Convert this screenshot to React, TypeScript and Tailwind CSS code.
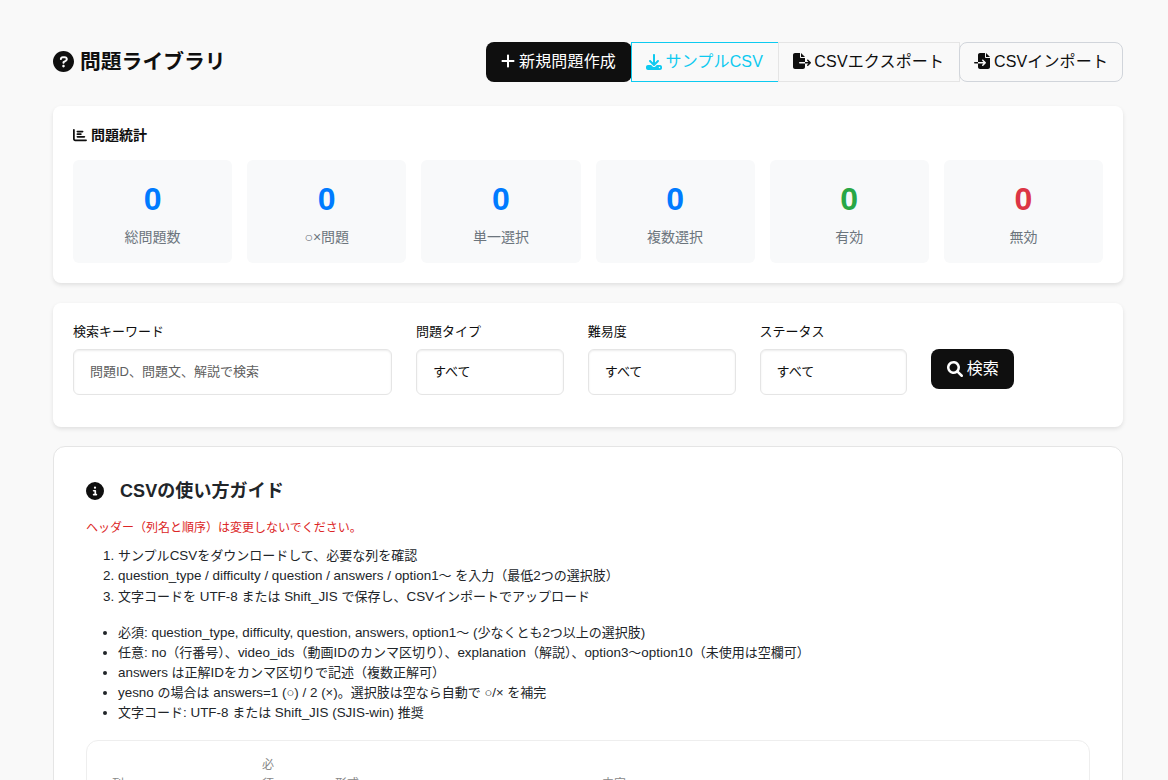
import React, { useState } from "react";
import {
  FaChartBar,
  FaCircleInfo,
  FaDownload,
  FaFileExport,
  FaFileImport,
  FaPlus,
} from "react-icons/fa6";

const stats = [
  { label: "総問題数", value: 0, color: "text-[#007bff]" },
  { label: "○×問題", value: 0, color: "text-[#007bff]" },
  { label: "単一選択", value: 0, color: "text-[#007bff]" },
  { label: "複数選択", value: 0, color: "text-[#007bff]" },
  { label: "有効", value: 0, color: "text-[#28a745]" },
  { label: "無効", value: 0, color: "text-[#dc3545]" },
];

const steps = [
  "サンプルCSVをダウンロードして、必要な列を確認",
  "question_type / difficulty / question / answers / option1〜 を入力（最低2つの選択肢）",
  "文字コードを UTF-8 または Shift_JIS で保存し、CSVインポートでアップロード",
];

const notes = [
  "必須: question_type, difficulty, question, answers, option1〜 (少なくとも2つ以上の選択肢)",
  "任意: no（行番号）、video_ids（動画IDのカンマ区切り）、explanation（解説）、option3〜option10（未使用は空欄可）",
  "answers は正解IDをカンマ区切りで記述（複数正解可）",
  "yesno の場合は answers=1 (○) / 2 (×)。選択肢は空なら自動で ○/× を補完",
  "文字コード: UTF-8 または Shift_JIS (SJIS-win) 推奨",
];

function QuestionIcon() {
  return (
    <svg viewBox="0 0 512 512" fill="currentColor" className="mb-px size-[21px]">
      <path d="M256 0C114.6 0 0 114.6 0 256s114.6 256 256 256s256-114.6 256-256S397.4 0 256 0zM256 400c-18 0-32-14-32-32s13.1-32 32-32c17.1 0 32 14 32 32S273.1 400 256 400zM325.1 258L280 286V288c0 13-11 24-24 24S232 301 232 288V272c0-8 4-16 12-21l57-34C308 213 312 206 312 198C312 186 301.1 176 289.1 176h-51.1C225.1 176 216 186 216 198c0 13-11 24-24 24s-24-11-24-24C168 159 199 128 237.1 128h51.1C329 128 360 159 360 198C360 222 347 245 325.1 258z" />
    </svg>
  );
}

function SearchIcon() {
  return (
    <svg viewBox="0 0 512 512" fill="currentColor" className="size-4">
      <path d="M500.3 443.7l-119.7-119.7c27.22-40.41 40.65-90.9 33.46-144.7C401.8 87.79 326.8 13.32 235.2 1.723C99.01-15.51-15.51 99.01 1.724 235.2c11.6 91.64 86.08 166.7 177.6 178.9c53.8 7.189 104.3-6.236 144.7-33.46l119.7 119.7c15.62 15.62 40.95 15.62 56.57 0C515.9 484.7 515.9 459.3 500.3 443.7zM79.1 208c0-70.58 57.42-128 128-128s128 57.42 128 128c0 70.58-57.42 128-128 128S79.1 278.6 79.1 208z" />
    </svg>
  );
}

// Latin runs are set slightly larger than the Japanese ones
function MixedText(props: { text: string }) {
  return (
    <>
      {props.text.split(/([ -~]+)/).map((part, i) =>
        i % 2 === 1 ? (
          part
        ) : (
          <span key={i} className="text-[13px]">
            {part}
          </span>
        )
      )}
    </>
  );
}

function Header() {
  return (
    <header className="flex justify-between items-center h-10">
      <h1 className="flex items-center gap-1.5 text-[20.8px] font-bold">
        <QuestionIcon />
        問題ライブラリ
      </h1>
      <div className="flex h-10 text-base tracking-[0.15px] whitespace-nowrap">
        <button className="flex items-center justify-center gap-1 w-[146px] pr-px rounded-lg bg-[#0f0f0f] text-white">
          <FaPlus className="w-[14px] h-4 mb-0.5" />
          新規問題作成
        </button>
        <button className="flex items-center justify-center gap-[3.5px] w-[148px] -ml-px pr-px border border-[#0dcaf0] text-[#0dcaf0]">
          <FaDownload className="mb-px" />
          サンプルCSV
        </button>
        <button className="flex items-center justify-center gap-[3.5px] w-[182px] -ml-px pr-px border border-[#e5e5e5] bg-[#f9f9f9]">
          <FaFileExport className="w-[18px] h-4 mb-0.5" />
          CSVエクスポート
        </button>
        <button className="flex items-center justify-center gap-1 w-[164px] -ml-px border border-[#d1d5db] rounded-lg bg-[#f9f9f9]">
          <FaFileImport className="mb-0.5" />
          CSVインポート
        </button>
      </div>
    </header>
  );
}

function Stats() {
  return (
    <section className="mt-6 h-[177px] p-5 rounded-lg bg-white shadow-[0_2px_4px_rgba(0,0,0,0.1)]">
      <h2 className="flex items-center gap-1 h-[18px] text-[14px] font-bold">
        <FaChartBar className="size-[14px]" />
        問題統計
      </h2>
      <div className="grid grid-cols-6 gap-[15px] mt-4">
        {stats.map((item) => (
          <div
            key={item.label}
            className="flex flex-col items-center h-[103px] pt-[15px] rounded-md bg-[#f8f9fa]"
          >
            <span className={"text-[32px] leading-[48px] font-bold " + item.color}>
              {item.value}
            </span>
            <span className="mt-1 text-[14px] leading-[21px] text-[#6c757d]">
              {item.label}
            </span>
          </div>
        ))}
      </div>
    </section>
  );
}

function SelectField(props: { label: string }) {
  return (
    <div className="w-[147.8px]">
      <label className="block h-[25px] mt-px text-[13px] leading-4">{props.label}</label>
      <select className="appearance-none block w-full h-[46px] px-4 border border-[#e5e5e5] rounded-md bg-white text-[13px] shadow-[inset_0_1px_2px_rgba(0,0,0,0.075)]">
        <option>すべて</option>
      </select>
    </div>
  );
}

function SearchForm() {
  const [keyword, setKeyword] = useState("");

  return (
    <section className="flex gap-6 mt-5 h-[124px] p-5 rounded-lg bg-white shadow-[0_2px_4px_rgba(0,0,0,0.1)]">
      <div className="w-[319px]">
        <label className="block h-[25px] mt-px text-[13px] leading-4">検索キーワード</label>
        <input
          className="block w-full h-[46px] px-4 pb-0.5 border border-[#e5e5e5] rounded-md bg-white text-[13px] placeholder:text-[#606060] shadow-[inset_0_1px_2px_rgba(0,0,0,0.075)]"
          placeholder="問題ID、問題文、解説で検索"
          value={keyword}
          onChange={(e) => setKeyword(e.target.value)}
        />
      </div>
      <SelectField label="問題タイプ" />
      <SelectField label="難易度" />
      <SelectField label="ステータス" />
      <button className="flex items-center justify-center gap-[3.5px] w-[83px] h-10 mt-[26px] rounded-lg bg-[#0f0f0f] text-base text-white">
        <SearchIcon />
        検索
      </button>
    </section>
  );
}

function Guide() {
  return (
    <section className="mt-[19px] px-8 pt-8 h-[500px] border border-[#e5e5e5] rounded-xl bg-white text-[#212529]">
      <h2 className="flex items-center gap-4 h-6 text-[18px] tracking-[0.08px] font-bold">
        <FaCircleInfo className="size-[18px] text-[#0f0f0f]" />
        CSVの使い方ガイド
      </h2>
      <p className="mt-4 h-[18px] text-[12px] leading-[18px] text-[#dc2626]">
        ヘッダー（列名と順序）は変更しないでください。
      </p>
      <ol className="mt-[9px] pl-8 list-decimal text-[13.4px] leading-[20.4px]">
        {steps.map((step) => (
          <li key={step}>
            <MixedText text={step} />
          </li>
        ))}
      </ol>
      <ul className="mt-4 pl-8 list-disc text-[13.4px] leading-5">
        {notes.map((note) => (
          <li key={note}>
            <MixedText text={note} />
          </li>
        ))}
      </ul>
      <div className="mt-[17px] h-[160px] border border-[#eee] rounded-xl">
        <table className="w-full table-fixed text-left text-[12px] leading-[19px] text-[#888]">
          <thead>
            <tr className="align-bottom">
              <th className="w-[150px] pl-[25px] pt-[15px] font-normal">列</th>
              <th className="w-[73px] pl-[25px] pr-9 pt-[15px] font-normal">必須</th>
              <th className="w-[267px] pl-[25px] pt-[15px] font-normal">形式</th>
              <th className="pl-[25px] pt-[15px] font-normal">内容</th>
            </tr>
          </thead>
        </table>
      </div>
    </section>
  );
}

export default function App() {
  return (
    <main className="h-[780px] overflow-hidden bg-[#f9f9f9] pl-[53px] pr-[45px] pt-[42px] text-[#0f0f0f] font-['Liberation_Sans','Noto_Sans_CJK_JP',sans-serif]">
      <Header />
      <Stats />
      <SearchForm />
      <Guide />
    </main>
  );
}
